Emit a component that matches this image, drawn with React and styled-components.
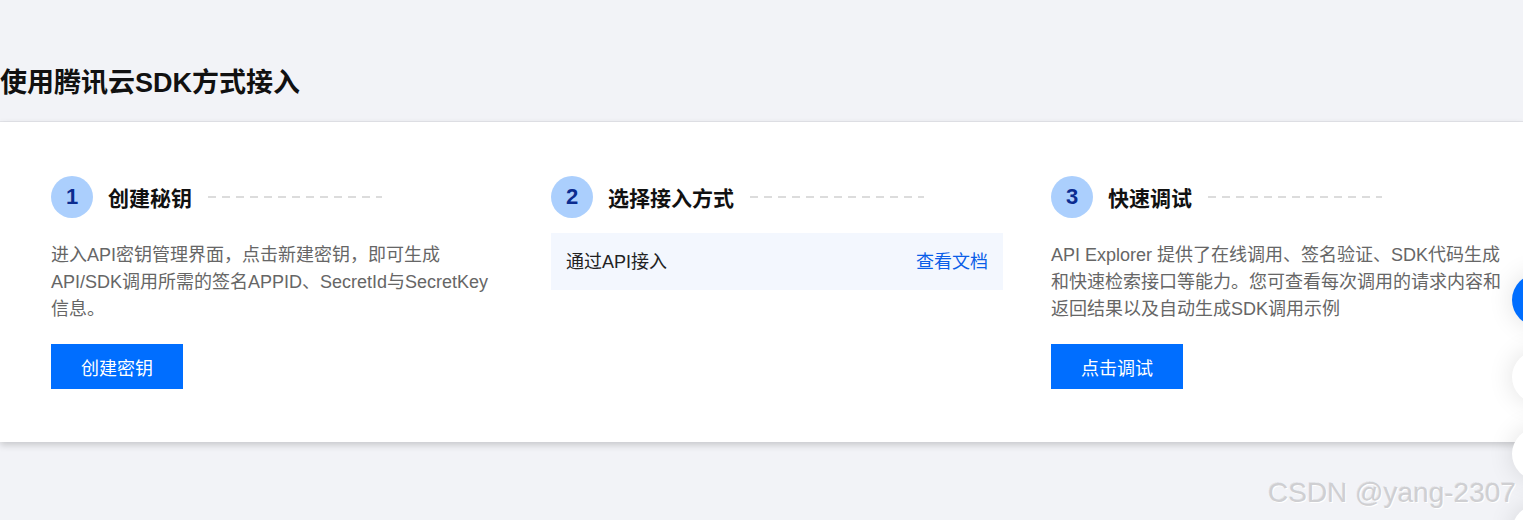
import React from "react";
import styled, { createGlobalStyle } from "styled-components";

const Global = createGlobalStyle`
  html, body { margin: 0; padding: 0; }
  body {
    background: #f2f3f7;
    font-family: "Liberation Sans", "Noto Sans CJK SC", sans-serif;
    overflow: hidden;
  }
`;

const Page = styled.div`
  position: relative;
  width: 1523px;
  height: 520px;
  overflow: hidden;
  background: #f2f3f7;
`;

const Title = styled.h1`
  margin: 0;
  padding: 65px 0 0 0;
  height: 57px;
  font-size: 27px;
  line-height: 36px;
  font-weight: 700;
  color: #111;
`;

const Card = styled.section`
  background: #fff;
  box-shadow: 0 3px 7px rgba(0, 0, 0, 0.18), 0 -1px 0 #e4e5ea;
  padding: 54px 0 53px 51px;
  display: grid;
  grid-template-columns: repeat(3, 452px);
  column-gap: 48px;
`;

const Step = styled.div`
  display: flex;
  flex-direction: column;
  align-items: flex-start;
`;

const StepHead = styled.div`
  display: flex;
  align-items: center;
  height: 42px;
  margin-bottom: 15px;
`;

const Num = styled.span`
  width: 42px;
  height: 42px;
  border-radius: 50%;
  background: #abcffd;
  color: #0b2c90;
  font-size: 22px;
  font-weight: 700;
  display: flex;
  align-items: center;
  justify-content: center;
  flex-shrink: 0;
`;

const StepTitle = styled.span`
  margin-left: 15px;
  font-size: 21px;
  font-weight: 700;
  color: #111;
`;

const Dash = styled.span`
  margin-left: 16px;
  width: 174px;
  height: 2px;
  background: repeating-linear-gradient(
    to right,
    #dcdcdc 0 8px,
    transparent 8px 14px
  );
`;

const Desc = styled.p`
  margin: 9px 0 0 0;
  font-size: 18px;
  line-height: 27px;
  color: #666;
`;

const Button = styled.button`
  margin-top: 21px;
  width: 132px;
  height: 45px;
  border: none;
  background: #006eff;
  color: #fff;
  font-family: inherit;
  font-size: 18px;
  cursor: pointer;
`;

const Option = styled.div`
  width: 100%;
  box-sizing: border-box;
  height: 57px;
  padding: 0 15px 3px;
  background: #f3f7fe;
  display: flex;
  align-items: center;
  justify-content: space-between;
  font-size: 18px;
  color: #222;
`;

const Link = styled.a`
  color: #0a5ee8;
  text-decoration: none;
  cursor: pointer;
`;

const Float = styled.div`
  position: absolute;
  left: 1512px;
  top: ${(p) => p.$top}px;
  width: 52px;
  height: 52px;
  border-radius: 50%;
  background: ${(p) => (p.$primary ? "#006eff" : "#fff")};
  box-shadow: 0 0 26px rgba(0, 0, 0, 0.12);
`;

const Watermark = styled.div`
  position: absolute;
  left: 1268px;
  top: 476px;
  font-family: "Liberation Sans", sans-serif;
  font-size: 28px;
  line-height: 34px;
  color: #cfcfd2;
  text-shadow: 1px 1px 0 #fff, -1px -1px 0 rgba(0, 0, 0, 0.06);
  white-space: nowrap;
  pointer-events: none;
`;

const steps = [
  {
    n: 1,
    title: "创建秘钥",
    desc: "进入API密钥管理界面，点击新建密钥，即可生成API/SDK调用所需的签名APPID、SecretId与SecretKey信息。",
    btn: "创建密钥",
  },
  { n: 2, title: "选择接入方式", option: true },
  {
    n: 3,
    title: "快速调试",
    desc: "API Explorer 提供了在线调用、签名验证、SDK代码生成和快速检索接口等能力。您可查看每次调用的请求内容和返回结果以及自动生成SDK调用示例",
    btn: "点击调试",
  },
];

export default function App() {
  return (
    <Page>
      <Global />
      <Title>使用腾讯云SDK方式接入</Title>
      <Card>
        {steps.map((s) => (
          <Step key={s.n}>
            <StepHead>
              <Num>{s.n}</Num>
              <StepTitle>{s.title}</StepTitle>
              <Dash />
            </StepHead>
            {s.option ? (
              <Option>
                <span>通过API接入</span>
                <Link>查看文档</Link>
              </Option>
            ) : (
              <>
                <Desc>{s.desc}</Desc>
                <Button>{s.btn}</Button>
              </>
            )}
          </Step>
        ))}
      </Card>
      <Float $top={274} $primary />
      <Float $top={351} />
      <Float $top={428} />
      <Float $top={505} />
      <Watermark>CSDN @yang-2307</Watermark>
    </Page>
  );
}
